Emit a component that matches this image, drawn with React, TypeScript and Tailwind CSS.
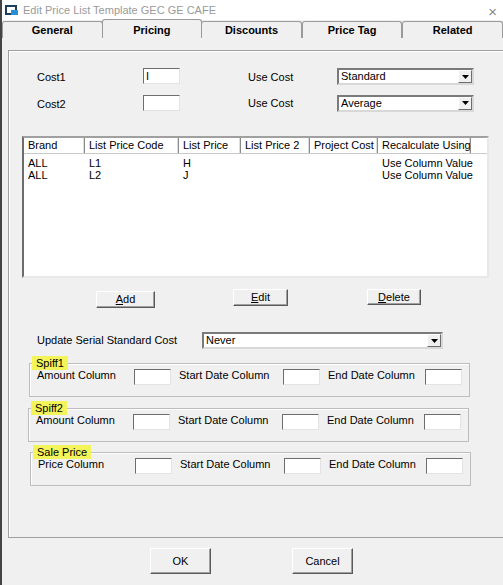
import React from "react";

const F = { fontFamily: '"Liberation Sans", Arial, sans-serif' };

function Input({ v = "", w = "w-[37px]" }: { v?: string; w?: string }) {
  return (
    <div className={`${w} h-[16px] bg-white border border-t-[#6d6d6d] border-l-[#6d6d6d] border-r-[#e3e3e3] border-b-[#e3e3e3] text-[11px] leading-[14px] pl-[2px]`}>{v}</div>
  );
}

function Select({ v, w }: { v: string; w: string }) {
  return (
    <div className={`${w} h-[17px] bg-white border-2 border-t-[#7a7a7a] border-l-[#7a7a7a] border-r-[#d8d8d8] border-b-[#d8d8d8] flex items-center`}>
      <span className="flex-1 pl-[2px] text-[11px] text-black">{v}</span>
      <div className="w-[14px] h-[13px] bg-[#f0f0f0] border border-t-white border-l-white border-r-[#6d6d6d] border-b-[#6d6d6d] flex items-center justify-center">
        <svg width="7" height="4" viewBox="0 0 7 4"><path d="M0 0h7L3.5 4z" fill="#000" /></svg>
      </div>
    </div>
  );
}

function Btn({ label, u, w, h = "h-[17px]" }: { label: string; u?: boolean; w: string; h?: string }) {
  return (
    <div className={`${w} ${h} bg-[#f0f0f0] border border-t-white border-l-white border-r-[#5a5a5a] border-b-[#5a5a5a] shadow-[inset_-1px_-1px_0_#a0a0a0] flex items-center justify-center text-[11px] text-black`}>
      {u ? <><span className="underline">{label[0]}</span>{label.slice(1)}</> : label}
    </div>
  );
}

function Group({ title, a, ml }: { title: string; a: string; ml: string }) {
  return (
    <div className={`relative ${ml} w-[441px] h-[34px] border border-[#bdbdbd] shadow-[inset_1px_1px_0_#fff] pl-[7px] pt-[5px]`}>
      <div className="absolute left-[2px] top-[-8px] bg-[#f3f35a] px-[4px] text-[11px] leading-[14px] text-black">{title}</div>
      <div className="flex items-start text-[11px] text-black whitespace-nowrap">
        <span className="w-[97px] leading-[12px]">{a}</span>
        <Input />
        <span className="ml-[8px] w-[104px] leading-[12px]">Start Date Column</span>
        <Input />
        <span className="ml-[8px] w-[97px] leading-[12px]">End Date Column</span>
        <Input />
      </div>
    </div>
  );
}

const cols: [string, number][] = [
  ["Brand", 61], ["List Price Code", 94], ["List Price", 62], ["List Price 2", 69], ["Project Cost", 68], ["Recalculate Using", 93],
];
const rows = [["ALL", "L1", "H", "", "", "Use Column Value"], ["ALL", "L2", "J", "", "", "Use Column Value"]];

export default function App() {
  return (
    <div style={F} className="w-[503px] h-[585px] bg-[#f0f0f0] border-l-2 border-[#444] overflow-hidden text-black">
      <div className="h-[20px] bg-white flex items-center relative">
        <svg className="ml-[3px]" width="14" height="12" viewBox="0 0 14 12">
          <rect x="1" y="2" width="10" height="8" fill="none" stroke="#1c3f5e" strokeWidth="2" />
          <path d="M6 6h7v5H6z" fill="#2a8fd6" />
        </svg>
        <span className="ml-[4px] text-[11px] text-[#9a9a9a]">Edit Price List Template GEC GE CAFE</span>
        <span className="absolute right-[6px] top-[1px] text-[15px] text-[#888] font-light">×</span>
      </div>
      <div className="h-[18px] flex items-end text-[11px] font-bold">
        {["General", "Pricing", "Discounts", "Price Tag", "Related"].map((t, i) => (
          <div key={t} className={`w-[101px] flex items-center justify-center border border-b-0 border-[#9a9a9a] rounded-t-[3px] bg-[#f0f0f0] ${i === 1 ? "h-[19px] pt-[3px] -mx-[1px] z-10 border-b-0" : "h-[17px] border-b border-b-[#9a9a9a]"}`}>{t}</div>
        ))}
      </div>
      <div className="pl-[6px] pt-[12px]">
        <div className="w-[510px] h-[488px] border border-[#a0a0a0] shadow-[inset_1px_1px_0_#fff]">
          <div className="mt-[17px] pl-[28px] flex items-start text-[11px] text-black">
            <span className="w-[106px] mt-[1px]">Cost1</span>
            <Input v="I" />
            <span className="ml-[68px] w-[89px] mt-[1px]">Use Cost</span>
            <Select v="Standard" w="w-[137px]" />
          </div>
          <div className="mt-[9px] pl-[28px] flex items-start text-[11px] text-black">
            <span className="w-[106px] mt-[1px]">Cost2</span>
            <Input />
            <span className="ml-[68px] w-[89px]">Use Cost</span>
            <Select v="Average" w="w-[137px]" />
          </div>
          <div className="mt-[24px] ml-[13px] w-[467px] h-[142px] bg-white border-2 border-t-[#a0a0a0] border-l-[#6d6d6d] border-r-[#e8e8e8] border-b-[#e8e8e8] text-[11px] text-black whitespace-nowrap">
            <div className="flex h-[16px] border-b border-[#c8c8c8]">
              {cols.map(([c, w]) => (
                <div key={c} style={{ width: w }} className="pl-[4px] leading-[15px] border-r border-[#8a8a8a] shadow-[inset_-1px_0_0_#ddd] overflow-hidden">{c}</div>
              ))}
            </div>
            <div className="pt-[3px]">
              {rows.map((r, i) => (
                <div key={i} className="flex h-[12px] leading-[12px]">
                  {r.map((c, j) => <div key={j} style={{ width: cols[j][1] }} className="pl-[4px]">{c}</div>)}
                </div>
              ))}
            </div>
          </div>
          <div className="mt-[11px] ml-[87px] flex items-start">
            <div className="mt-[2px]"><Btn label="Add" u w="w-[59px]" /></div>
            <div className="ml-[78px]"><Btn label="Edit" u w="w-[55px]" /></div>
            <div className="ml-[79px]"><Btn label="Delete" u w="w-[54px]" h="h-[16px]" /></div>
          </div>
          <div className="mt-[24px] pl-[28px] flex items-start text-[11px] text-black">
            <span className="w-[165px]">Update Serial Standard Cost</span>
            <Select v="Never" w="w-[241px]" />
          </div>
          <div className="mt-[14px]"><Group title="Spiff1" a="Amount Column" ml="ml-[20px]" /></div>
          <div className="mt-[11px]"><Group title="Spiff2" a="Amount Column" ml="ml-[19px]" /></div>
          <div className="mt-[10px]"><Group title="Sale Price" a="Price Column" ml="ml-[21px]" /></div>
        </div>
      </div>
      <div className="mt-[10px] ml-[148px] flex">
        <Btn label="OK" w="w-[61px]" h="h-[26px]" />
        <div className="ml-[81px]"><Btn label="Cancel" w="w-[61px]" h="h-[26px]" /></div>
      </div>
    </div>
  );
}
